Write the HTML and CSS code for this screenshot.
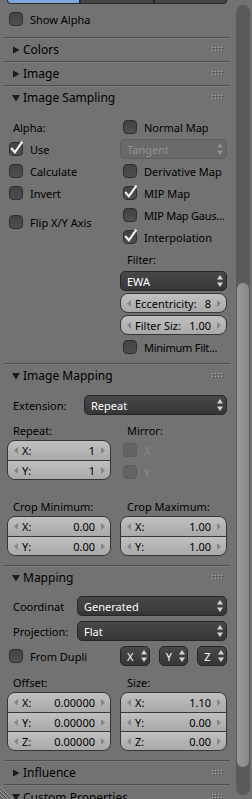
FILE: index.html
```html
<!DOCTYPE html>
<html lang="en">
<head>
    <meta charset="UTF-8">
    <meta name="viewport" content="width=device-width, initial-scale=1.0">
    <title>Texture Properties</title>
    <link rel="stylesheet" href="styles.css">
</head>
<body>
    <svg class="defs" width="0" height="0">
        <defs>
            <symbol id="tri-r" viewBox="0 0 8 8"><polygon points="1,0.5 7.5,4 1,7.5" fill="currentColor"/></symbol>
            <symbol id="tri-d" viewBox="0 0 8 8"><polygon points="0,1 8,1 4,7.5" fill="currentColor"/></symbol>
            <symbol id="grip" viewBox="0 0 12 6">
                <g fill="#4c4c4c">
                    <rect x="1" y="1" width="1" height="1"/><rect x="4" y="1" width="1" height="1"/><rect x="7" y="1" width="1" height="1"/><rect x="10" y="1" width="1" height="1"/>
                    <rect x="1" y="4" width="1" height="1"/><rect x="4" y="4" width="1" height="1"/><rect x="7" y="4" width="1" height="1"/><rect x="10" y="4" width="1" height="1"/>
                </g>
                <g fill="#b4b4b4">
                    <rect x="0" y="0" width="1" height="1"/><rect x="3" y="0" width="1" height="1"/><rect x="6" y="0" width="1" height="1"/><rect x="9" y="0" width="1" height="1"/>
                    <rect x="0" y="3" width="1" height="1"/><rect x="3" y="3" width="1" height="1"/><rect x="6" y="3" width="1" height="1"/><rect x="9" y="3" width="1" height="1"/>
                </g>
            </symbol>
            <symbol id="updown" viewBox="0 0 6 14"><polygon points="0,5.5 3,1 6,5.5" fill="currentColor"/><polygon points="0,8.5 3,13 6,8.5" fill="currentColor"/></symbol>
            <symbol id="arr-l" viewBox="0 0 4 7"><polygon points="4,0 0,3.5 4,7" fill="currentColor"/></symbol>
            <symbol id="arr-r" viewBox="0 0 4 7"><polygon points="0,0 4,3.5 0,7" fill="currentColor"/></symbol>
            <symbol id="tick" viewBox="0 0 14 14"><path d="M2 6.5 L5.5 10.5 L12.5 0.5" fill="none" stroke="currentColor" stroke-width="2"/></symbol>
        </defs>
    </svg>

    <div class="screen">
        <div class="main">
            <div class="tabs">
                <span class="tab active"></span>
                <span class="tab"></span>
                <span class="tab"></span>
            </div>

            <div class="top-opts">
                <div class="check"><span class="box"></span>Show Alpha</div>
            </div>

            <section class="panel">
                <div class="panel-head">
                    <svg class="tri"><use href="#tri-r"/></svg><span class="title">Colors</span>
                    <svg class="grip"><use href="#grip"/></svg>
                </div>
            </section>

            <section class="panel">
                <div class="panel-head">
                    <svg class="tri"><use href="#tri-r"/></svg><span class="title">Image</span>
                    <svg class="grip"><use href="#grip"/></svg>
                </div>
            </section>

            <section class="panel">
                <div class="panel-head">
                    <svg class="tri"><use href="#tri-d"/></svg><span class="title">Image Sampling</span>
                    <svg class="grip"><use href="#grip"/></svg>
                </div>
                <div class="panel-body sampling">
                    <div class="cols">
                        <div class="col col-l">
                            <div class="row label">Alpha:</div>
                            <div class="row check"><span class="box"><svg class="tick"><use href="#tick"/></svg></span>Use</div>
                            <div class="row check"><span class="box"></span>Calculate</div>
                            <div class="row check"><span class="box"></span>Invert</div>
                            <div class="spacer"></div>
                            <div class="row check"><span class="box"></span>Flip X/Y Axis</div>
                        </div>
                        <div class="col col-r">
                            <div class="row check"><span class="box"></span>Normal Map</div>
                            <div class="row menu off"><span>Tangent</span><svg class="updown"><use href="#updown"/></svg></div>
                            <div class="row check"><span class="box"></span>Derivative Map</div>
                            <div class="row check"><span class="box"><svg class="tick"><use href="#tick"/></svg></span>MIP Map</div>
                            <div class="row check tight"><span class="box"></span>MIP Map Gaus...</div>
                            <div class="row check"><span class="box"><svg class="tick"><use href="#tick"/></svg></span>Interpolation</div>
                            <div class="row label">Filter:</div>
                            <div class="row menu"><span>EWA</span><svg class="updown"><use href="#updown"/></svg></div>
                            <div class="row num single"><svg class="arr"><use href="#arr-l"/></svg><span>Eccentricity:</span><span class="val">8</span><svg class="arr"><use href="#arr-r"/></svg></div>
                            <div class="row num single"><svg class="arr"><use href="#arr-l"/></svg><span>Filter Siz:</span><span class="val">1.00</span><svg class="arr"><use href="#arr-r"/></svg></div>
                            <div class="row check tight"><span class="box"></span>Minimum Filt...</div>
                        </div>
                    </div>
                </div>
            </section>

            <section class="panel">
                <div class="panel-head">
                    <svg class="tri"><use href="#tri-d"/></svg><span class="title">Image Mapping</span>
                    <svg class="grip"><use href="#grip"/></svg>
                </div>
                <div class="panel-body mapping-img">
                    <div class="prop ext">
                        <span class="prop-label">Extension:</span>
                        <div class="menu"><span>Repeat</span><svg class="updown"><use href="#updown"/></svg></div>
                    </div>
                    <div class="cols">
                        <div class="col col-l">
                            <div class="cap">Repeat:</div>
                            <div class="num-group">
                                <div class="num"><svg class="arr"><use href="#arr-l"/></svg><span>X:</span><span class="val">1</span><svg class="arr"><use href="#arr-r"/></svg></div>
                                <div class="num"><svg class="arr"><use href="#arr-l"/></svg><span>Y:</span><span class="val">1</span><svg class="arr"><use href="#arr-r"/></svg></div>
                            </div>
                        </div>
                        <div class="col col-r">
                            <div class="cap">Mirror:</div>
                            <div class="row check off"><span class="box"></span>X</div>
                            <div class="row check off"><span class="box"></span>Y</div>
                        </div>
                    </div>
                    <div class="cols crop">
                        <div class="col col-l">
                            <div class="cap">Crop Minimum:</div>
                            <div class="num-group">
                                <div class="num"><svg class="arr"><use href="#arr-l"/></svg><span>X:</span><span class="val">0.00</span><svg class="arr"><use href="#arr-r"/></svg></div>
                                <div class="num"><svg class="arr"><use href="#arr-l"/></svg><span>Y:</span><span class="val">0.00</span><svg class="arr"><use href="#arr-r"/></svg></div>
                            </div>
                        </div>
                        <div class="col col-r">
                            <div class="cap">Crop Maximum:</div>
                            <div class="num-group">
                                <div class="num"><svg class="arr"><use href="#arr-l"/></svg><span>X:</span><span class="val">1.00</span><svg class="arr"><use href="#arr-r"/></svg></div>
                                <div class="num"><svg class="arr"><use href="#arr-l"/></svg><span>Y:</span><span class="val">1.00</span><svg class="arr"><use href="#arr-r"/></svg></div>
                            </div>
                        </div>
                    </div>
                </div>
            </section>

            <section class="panel">
                <div class="panel-head">
                    <svg class="tri"><use href="#tri-d"/></svg><span class="title">Mapping</span>
                    <svg class="grip"><use href="#grip"/></svg>
                </div>
                <div class="panel-body mapping">
                    <div class="prop">
                        <span class="prop-label">Coordinat</span>
                        <div class="menu"><span>Generated</span><svg class="updown"><use href="#updown"/></svg></div>
                    </div>
                    <div class="prop">
                        <span class="prop-label">Projection:</span>
                        <div class="menu"><span>Flat</span><svg class="updown"><use href="#updown"/></svg></div>
                    </div>
                    <div class="dupli">
                        <div class="check"><span class="box"></span>From Dupli</div>
                        <div class="xyz">
                            <div class="menu"><span>X</span><svg class="updown"><use href="#updown"/></svg></div>
                            <div class="menu"><span>Y</span><svg class="updown"><use href="#updown"/></svg></div>
                            <div class="menu"><span>Z</span><svg class="updown"><use href="#updown"/></svg></div>
                        </div>
                    </div>
                    <div class="cols">
                        <div class="col col-l">
                            <div class="cap">Offset:</div>
                            <div class="num-group">
                                <div class="num"><svg class="arr"><use href="#arr-l"/></svg><span>X:</span><span class="val">0.00000</span><svg class="arr"><use href="#arr-r"/></svg></div>
                                <div class="num"><svg class="arr"><use href="#arr-l"/></svg><span>Y:</span><span class="val">0.00000</span><svg class="arr"><use href="#arr-r"/></svg></div>
                                <div class="num"><svg class="arr"><use href="#arr-l"/></svg><span>Z:</span><span class="val">0.00000</span><svg class="arr"><use href="#arr-r"/></svg></div>
                            </div>
                        </div>
                        <div class="col col-r">
                            <div class="cap">Size:</div>
                            <div class="num-group">
                                <div class="num"><svg class="arr"><use href="#arr-l"/></svg><span>X:</span><span class="val">1.10</span><svg class="arr"><use href="#arr-r"/></svg></div>
                                <div class="num"><svg class="arr"><use href="#arr-l"/></svg><span>Y:</span><span class="val">0.00</span><svg class="arr"><use href="#arr-r"/></svg></div>
                                <div class="num"><svg class="arr"><use href="#arr-l"/></svg><span>Z:</span><span class="val">0.00</span><svg class="arr"><use href="#arr-r"/></svg></div>
                            </div>
                        </div>
                    </div>
                </div>
            </section>

            <section class="panel">
                <div class="panel-head">
                    <svg class="tri"><use href="#tri-r"/></svg><span class="title">Influence</span>
                    <svg class="grip"><use href="#grip"/></svg>
                </div>
            </section>

            <section class="panel last">
                <div class="panel-head">
                    <svg class="tri"><use href="#tri-d"/></svg><span class="title">Custom Properties</span>
                    <svg class="grip"><use href="#grip"/></svg>
                </div>
            </section>
        </div>

        <div class="scroll">
            <div class="track"><div class="thumb"></div></div>
        </div>

        <!-- resize corner of the region -->
        <svg class="corner" width="12" height="16" viewBox="0 0 12 16">
            <path d="M0 4 L12 16 M0 8 L8 16 M0 12 L4 16" stroke="#a0a0a0" stroke-width="1"/>
            <path d="M0 5 L11 16 M0 9 L7 16 M0 13 L3 16" stroke="#4a4a4a" stroke-width="1"/>
        </svg>
    </div>
</body>
</html>
```

FILE: styles.css
```css
* {
    box-sizing: border-box;
}

body {
    margin: 0;
    background-color: #727272;
    font-family: 'Noto Sans', 'DejaVu Sans', sans-serif;
    font-size: 11px;
    color: #000;
    white-space: nowrap;
}

.defs {
    position: absolute;
}

.screen {
    display: flex;
    width: 252px;
    height: 799px;
    overflow: hidden;
    position: relative;
}

.main {
    width: 236px;
    flex: none;
}

/* tab strip, only its lower edge is visible */
.tabs {
    display: flex;
    height: 4px;
    margin: 0 9px 0 7px;
}

.tab {
    flex: 1;
    background-color: #454545;
    border: 1px solid #2a2a2a;
    border-top: none;
}

.tab:first-child {
    border-radius: 0 0 0 4px;
}

.tab:last-child {
    border-radius: 0 0 4px 0;
}

.tab.active {
    background-color: #7fa7de;
}

.top-opts {
    height: 33px;
    padding: 5px 0 0 9px;
}

.check {
    display: flex;
    align-items: center;
    gap: 7px;
    height: 20px;
}

.check.tight {
    letter-spacing: -0.25px;
}

.box {
    width: 14px;
    height: 14px;
    flex: none;
    border-radius: 4px;
    background: linear-gradient(#434343, #4f4f4f);
    border: 1px solid #2e2e2e;
    position: relative;
}

.tick {
    position: absolute;
    left: -1px;
    top: -2px;
    width: 15px;
    height: 15px;
    color: #f0f0f0;
    overflow: visible;
}

.check.off {
    color: #8a8a8a;
}

.check.off .box {
    background: #646464;
    border-color: #5c5c5c;
}

/* panels */
.panel {
    margin: 0 6px 0 4px;
    border-top: 1px solid #4e4e4e;
    box-shadow: inset 0 1px 0 #7c7c7c;
}

.panel-head {
    display: flex;
    align-items: center;
    height: 23px;
    padding: 0 6px 0 8px;
    font-size: 12px;
}

.panel.last .panel-head {
    height: 24px;
}

.tri {
    width: 8px;
    height: 8px;
    margin-right: 3px;
    color: #1c1c1c;
}

.grip {
    width: 12px;
    height: 6px;
    margin-left: auto;
}

.panel-body {
    padding: 8px 3px 6px;
}

.cols {
    display: flex;
    gap: 9px;
}

.col-l {
    width: 104px;
}

.col-r {
    width: 107px;
}

.row {
    height: 20px;
    margin-bottom: 2px;
}

.col > :last-child {
    margin-bottom: 0;
}

.label,
.cap {
    display: flex;
    align-items: center;
    padding-left: 6px;
}

.col-r .label,
.col-r .cap {
    padding-left: 7px;
}

.cap {
    height: 20px;
}

.col-l .check {
    padding-left: 2px;
}

.col-r .check {
    padding-left: 3px;
}

.spacer {
    height: 7px;
}

/* drop-down menus */
.menu {
    display: flex;
    align-items: center;
    justify-content: space-between;
    height: 20px;
    padding: 0 3px 0 6px;
    border-radius: 5px;
    background: linear-gradient(#484848, #363636);
    border: 1px solid #262626;
    color: #fff;
}

.updown {
    width: 6px;
    height: 14px;
    color: #d4d4d4;
}

.menu.off {
    background: #696969;
    border-color: #5e5e5e;
    color: #929292;
}

.menu.off .updown {
    color: #929292;
}

/* number fields */
.num {
    display: flex;
    align-items: center;
    height: 19px;
    padding: 0 5px 0 6px;
    background: linear-gradient(#c0c0c0, #a9a9a9);
}

.num + .num {
    border-top: 1px solid #383838;
    height: 19px;
}

.num.single {
    height: 20px;
    border: 1px solid #363636;
    border-radius: 8px;
}

.num-group {
    border: 1px solid #363636;
    border-radius: 8px;
    overflow: hidden;
}

.arr {
    width: 4px;
    height: 7px;
    flex: none;
    color: #868686;
}

.arr:first-child {
    margin-right: 4px;
}

.val {
    margin-left: auto;
    margin-right: 6px;
}

/* property rows with a label on the left */
.prop {
    display: flex;
    height: 20px;
    margin-bottom: 5px;
}

.prop-label {
    width: 70px;
    flex: none;
    padding-left: 6px;
    display: flex;
    align-items: center;
}

.prop .menu {
    flex: 1;
}

.ext .prop-label {
    width: 77px;
}

.crop {
    margin-top: 14px;
}

.mapping-img {
    padding-bottom: 9px;
}

.mapping {
    padding-top: 7px;
    padding-bottom: 9px;
}

.dupli {
    display: flex;
    height: 20px;
    margin-bottom: 6px;
}

.dupli .check {
    width: 113px;
    padding-left: 2px;
}

.xyz {
    display: flex;
    gap: 9px;
    flex: 1;
}

.xyz .menu {
    flex: 1;
    padding: 0 2px 0 6px;
}

/* scrollbar */
.scroll {
    width: 16px;
    padding: 5px 2px 4px 0;
}

.track {
    height: 100%;
    background-color: #5a5a5a;
    border-radius: 7px;
    padding: 278px 1px 0;
}

.thumb {
    height: 484px;
    background: linear-gradient(to right, #9a9a9a, #878787);
    border-radius: 6px;
}

.corner {
    position: absolute;
    left: 0;
    bottom: 0;
}
```
